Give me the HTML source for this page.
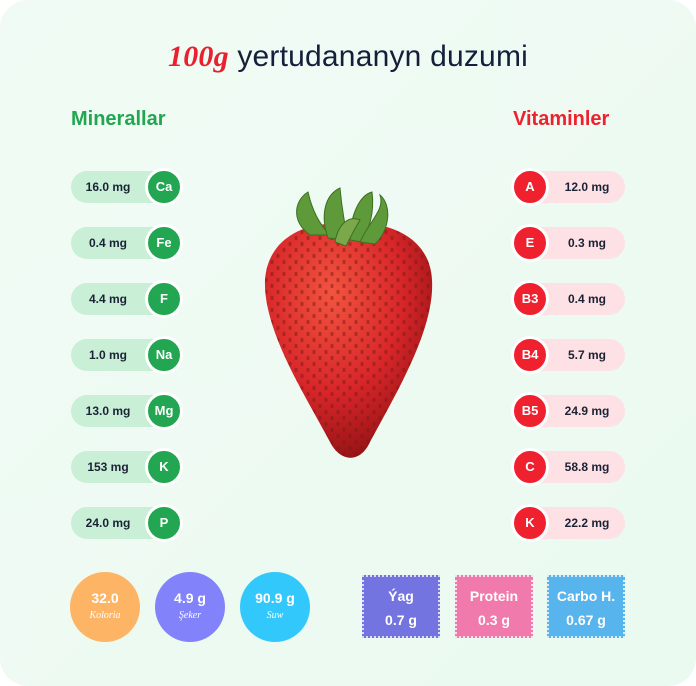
<!DOCTYPE html>
<html><head><meta charset="utf-8"><style>
*{margin:0;padding:0;box-sizing:border-box}
body{width:696px;height:686px;background:#fff;font-family:"Liberation Sans",sans-serif;position:relative;overflow:hidden}
.card{position:absolute;left:0;top:0;width:696px;height:686px;border-radius:28px;background:linear-gradient(135deg,#f1fbf5,#eafaf0)}
.title{position:absolute;top:40px;left:0;width:696px;text-align:center;font-size:30px;color:#14203a;letter-spacing:0.2px}
.title i{font-family:"Liberation Serif",serif;color:#e8202f;font-weight:bold}
h2{position:absolute;top:108px;font-size:20px;font-weight:bold}
.pill{position:absolute;height:32px;border-radius:16px;font-size:12px;font-weight:bold;color:#1b2236;line-height:32px}
.pl{left:71px;width:110px;background:#c9f0d6;padding-right:36px;text-align:center}
.pr{left:513px;width:112px;background:#fde1e5;padding-left:36px;text-align:center}
.c{position:absolute;width:38px;height:38px;border-radius:50%;border:3px solid #fff;color:#fff;font-size:13px;font-weight:bold;text-align:center;line-height:32px;top:-3px}
.pl .c{right:-2px;background:#22a651}
.pr .c{left:-2px;background:#f0212f}
.circ{position:absolute;top:572px;width:70px;height:70px;border-radius:50%;color:#fff;text-align:center;font-weight:bold;font-size:14px;padding-top:18px;line-height:17px}
.circ small{display:block;font-family:"Liberation Serif",serif;font-style:italic;font-size:10px;font-weight:normal}
.box{position:absolute;top:575px;width:78px;height:63px;color:#fff;text-align:center;font-weight:bold;font-size:14px;line-height:24px;padding-top:7px;border:2px dotted rgba(255,255,255,.75)}
</style></head><body>
<div class="card"></div>
<div class="title"><i>100g</i> yertudananyn duzumi</div>
<h2 style="left:71px;color:#22a651">Minerallar</h2>
<h2 style="left:513px;color:#f0212f">Vitaminler</h2>

<div class="pill pl" style="top:171px">16.0 mg<div class="c">Ca</div></div>
<div class="pill pl" style="top:227px">0.4 mg<div class="c">Fe</div></div>
<div class="pill pl" style="top:283px">4.4 mg<div class="c">F</div></div>
<div class="pill pl" style="top:339px">1.0 mg<div class="c">Na</div></div>
<div class="pill pl" style="top:395px">13.0 mg<div class="c">Mg</div></div>
<div class="pill pl" style="top:451px">153 mg<div class="c">K</div></div>
<div class="pill pl" style="top:507px">24.0 mg<div class="c">P</div></div>

<div class="pill pr" style="top:171px"><div class="c">A</div>12.0 mg</div>
<div class="pill pr" style="top:227px"><div class="c">E</div>0.3 mg</div>
<div class="pill pr" style="top:283px"><div class="c">B3</div>0.4 mg</div>
<div class="pill pr" style="top:339px"><div class="c">B4</div>5.7 mg</div>
<div class="pill pr" style="top:395px"><div class="c">B5</div>24.9 mg</div>
<div class="pill pr" style="top:451px"><div class="c">C</div>58.8 mg</div>
<div class="pill pr" style="top:507px"><div class="c">K</div>22.2 mg</div>

<svg style="position:absolute;left:250px;top:180px" width="200" height="290" viewBox="0 0 200 290">
<defs>
<radialGradient id="r" cx="40%" cy="30%" r="70%"><stop offset="0" stop-color="#f2543f"/><stop offset=".6" stop-color="#d8262a"/><stop offset="1" stop-color="#9a1416"/></radialGradient>
<pattern id="s" width="12" height="12" patternUnits="userSpaceOnUse"><ellipse cx="4" cy="4" rx="1.6" ry="2.2" fill="#7a1a12"/><ellipse cx="10" cy="10" rx="1.6" ry="2.2" fill="#7a1a12"/></pattern>
</defs>
<path d="M98 44 C55 40 18 58 15 100 C13 150 55 215 80 262 C90 282 110 284 120 262 C145 215 185 150 182 100 C180 58 140 40 98 44Z" fill="url(#r)"/>
<path d="M98 44 C55 40 18 58 15 100 C13 150 55 215 80 262 C90 282 110 284 120 262 C145 215 185 150 182 100 C180 58 140 40 98 44Z" fill="url(#s)" opacity=".5"/>
<g fill="#5e9a3a" stroke="#3d6e24" stroke-width="1">
<path d="M60 55 C40 40 45 20 58 12 C62 30 70 45 80 55Z"/>
<path d="M78 58 C70 35 75 15 90 8 C92 30 95 45 98 60Z"/>
<path d="M100 60 C100 35 110 15 122 12 C125 35 118 50 112 62Z"/>
<path d="M110 62 C120 40 135 30 130 15 C142 25 140 50 125 64Z"/>
<path d="M85 62 C88 45 98 35 110 40 C104 50 100 58 96 66Z" fill="#7aa84a"/>
</g>
</svg>

<div class="circ" style="left:70px;background:#fdb464">32.0<small>Koloria</small></div>
<div class="circ" style="left:155px;background:#8283fb">4.9 g<small>Şeker</small></div>
<div class="circ" style="left:240px;background:#33c8fb">90.9 g<small>Suw</small></div>
<div class="box" style="left:362px;background:#7474e0">Ýag<br>0.7 g</div>
<div class="box" style="left:455px;background:#f07aab">Protein<br>0.3 g</div>
<div class="box" style="left:547px;background:#58b4ec">Carbo H.<br>0.67 g</div>
</body></html>
